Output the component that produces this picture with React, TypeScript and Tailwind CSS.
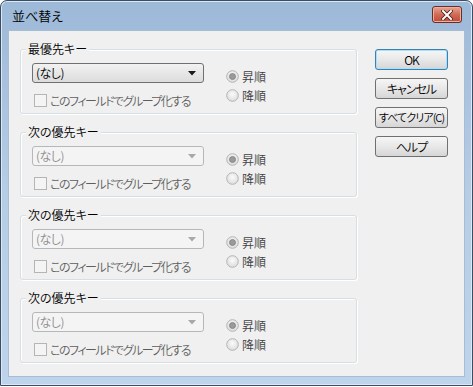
import React from "react";

const FONT = "font-['Noto_Sans_CJK_JP',sans-serif] [font-feature-settings:'palt'] font-[350]";

function Radio({ checked, label }: { checked?: boolean; label: string }) {
  return (
    <div className="flex items-center gap-[3px] h-[19px]">
      <svg width="13" height="13" viewBox="0 0 13 13">
        <defs>
          <radialGradient id="rg" cx="50%" cy="40%" r="60%">
            <stop offset="0%" stopColor="#fbfbfb" />
            <stop offset="100%" stopColor="#dcdcdc" />
          </radialGradient>
        </defs>
        <circle cx="6.5" cy="6.5" r="5.8" fill="url(#rg)" stroke="#b4b4b4" strokeWidth="1" />
        {checked && <circle cx="6.5" cy="6.5" r="3" fill="#9a9a9a" stroke="#7d7d7d" strokeWidth="0.8" />}
      </svg>
      <span className="text-[12px] leading-none text-[#3f3f3f]">{label}</span>
    </div>
  );
}

function Combo({ enabled }: { enabled?: boolean }) {
  return (
    <div
      className={
        "w-[172px] h-[20px] rounded-[3px] border flex items-center justify-between pl-[3px] pr-[7px] " +
        (enabled
          ? "border-[#707070] bg-gradient-to-b from-[#f2f2f2] to-[#dcdcdc] text-black"
          : "border-[#b5b8bb] bg-[#f4f4f4] text-[#8d8d8d]")
      }
    >
      <span className="text-[12px] leading-none tracking-[-0.5px]">(なし)</span>
      <svg width="8" height="5" viewBox="0 0 8 5">
        <path d="M0 0 H8 L4 4.5 Z" fill={enabled ? "#1a1a1a" : "#a8a8a8"} />
      </svg>
    </div>
  );
}

function Group({ title, enabled }: { title: string; enabled?: boolean }) {
  return (
    <div className="w-[337px] h-[65px] border border-[#d5dfe5] rounded-[3px] shadow-[inset_1px_1px_0_#ffffff,1px_1px_0_#ffffff]">
      <div className="w-fit -mt-[9px] ml-[5px] px-[2px] bg-[#f0f0f0] text-[12px] leading-[16px] text-black whitespace-nowrap">
        {title}
      </div>
      <div className="flex pt-[6px] pl-[11px]">
        <div className="flex flex-col gap-[11px] w-[172px] shrink-0">
          <Combo enabled={enabled} />
          <div className="flex items-center gap-[3px] pl-[2px]">
            <div className="w-[13px] h-[13px] shrink-0 border border-[#b5b5b5] bg-[#f4f4f4]" />
            <span className="text-[12px] leading-none text-[#5e5e5e] tracking-[-1.5px] whitespace-nowrap">
              このフィールドでグループ化する
            </span>
          </div>
        </div>
        <div className="flex flex-col ml-[22px] pt-[4px]">
          <Radio checked label="昇順" />
          <Radio label="降順" />
        </div>
      </div>
    </div>
  );
}

function Btn({ label, def, tight }: { label: string; def?: boolean; tight?: boolean }) {
  return (
    <div
      className={
        "w-[73px] h-[21px] rounded-[3px] border flex items-center justify-center leading-none text-black whitespace-nowrap bg-gradient-to-b from-[#f6f6f6] via-[#e8e8e8] to-[#d6d6d6] " +
        (tight ? "text-[11px] tracking-[-0.9px] " : "text-[12px] tracking-[-1px] ") +
        (def ? "border-[#3c7fb1] shadow-[inset_0_0_0_1px_#a8e0f8]" : "border-[#707070]")
      }
    >
      {label}
    </div>
  );
}

export default function App() {
  return (
    <div className={"w-[473px] h-[387px] bg-white " + FONT}>
      <div className="w-[473px] h-[386px] rounded-t-[7px] border border-[#3b4d61] bg-gradient-to-b from-[#9db9d8] via-[#b6cde6] to-[#bdd4ec] flex flex-col shadow-[inset_0_0_0_1px_#dbe8f5]">
        <div className="h-[29px] flex items-center justify-between pl-[11px] pr-[10px]">
          <span className="text-[13px] leading-none text-black">並べ替え</span>
          <div className="w-[30px] h-[17px] -mt-[2px] rounded-[3px] border border-[#6b2e24] bg-gradient-to-b from-[#e6a594] via-[#cf6b57] to-[#c24a33] flex items-center justify-center shadow-[inset_0_0_0_1px_#eab0a2]">
            <svg width="12" height="10" viewBox="0 0 12 10">
              <path d="M2 1 L10 9 M10 1 L2 9" stroke="#4a1a12" strokeWidth="3.6" strokeLinecap="square" />
              <path d="M2 1 L10 9 M10 1 L2 9" stroke="#ffffff" strokeWidth="2" strokeLinecap="square" />
            </svg>
          </div>
        </div>
        <div className="mx-[7px] h-[347px] bg-[#f0f0f0] border border-[#a9bdd2] flex pt-[18px] pl-[11px]">
          <div className="flex flex-col gap-[18px]">
            <Group title="最優先キー" enabled />
            <Group title="次の優先キー" />
            <Group title="次の優先キー" />
            <Group title="次の優先キー" />
          </div>
          <div className="flex flex-col gap-[8px] ml-[18px]">
            <Btn label="OK" def />
            <Btn label="キャンセル" />
            <Btn label="すべてクリア(C)" tight />
            <Btn label="ヘルプ" />
          </div>
        </div>
      </div>
    </div>
  );
}
